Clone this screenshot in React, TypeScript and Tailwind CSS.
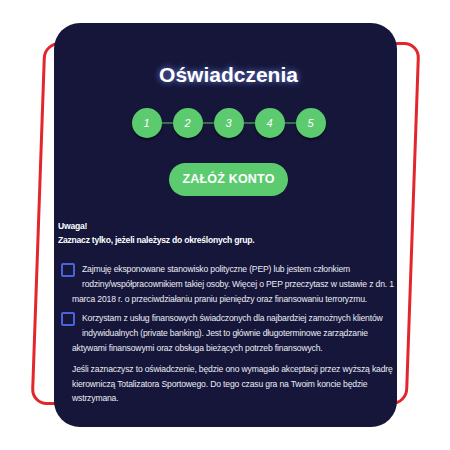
const steps = [1, 2, 3, 4, 5]

function Step({ n }: { n: number }) {
  return (
    <div className="w-[30px] h-[30px] rounded-full bg-[#5ccb70] shadow-[0_2px_2px_rgba(0,0,0,0.45)] flex items-center justify-center">
      <span className="text-[11px] italic text-white leading-none">{n}</span>
    </div>
  )
}

function Declaration({ lines }: { lines: string[] }) {
  return (
    <div className="pl-[14px] text-[8.6px] tracking-[-0.16px] leading-[15px] text-[#ececf4] whitespace-nowrap flow-root">
      <span className="float-left w-[14px] h-[14px] mt-[0.5px] ml-[-11px] mr-[7px] mb-[8px] rounded-[2px] border-2 border-[#4b62dd]" />
      {lines.map((line, i) => (
        <span key={i}>
          {line}
          {i < lines.length - 1 && <br />}
        </span>
      ))}
    </div>
  )
}

export default function App() {
  return (
    <div
      className="relative w-[450px] h-[450px] bg-white overflow-hidden"
      style={{ fontFamily: '"Liberation Sans", Arial, sans-serif' }}
    >
      {/* red outline behind the card */}
      <div className="absolute left-[37px] top-[42px] w-[377px] h-[363px] rounded-[16px] border-[3px] border-[#e3262b] [transform:skewX(-2deg)]" />

      <div className="relative ml-[54px] mt-[23px] w-[343px] h-[404px] rounded-[26px] bg-[#15163a] px-[4px] pt-[38px]">
        <div className="flex flex-col items-center pl-[6px]">
          <h1 className="text-[21px] font-bold leading-[28px] text-white [text-shadow:0_0_6px_rgba(130,150,255,0.85)]">
            Oświadczenia
          </h1>

          <div className="mt-[19px] flex items-center">
            {steps.map((n, i) => (
              <div key={n} className="flex items-center">
                {i > 0 && <div className="w-[11px] h-[2px] bg-[#347049]" />}
                <Step n={n} />
              </div>
            ))}
          </div>

          <button className="mt-[25px] w-[119px] h-[33px] rounded-full bg-[#5ccb70] text-white text-[12.5px] font-bold tracking-[0.2px]">
            ZAŁÓŻ KONTO
          </button>
        </div>

        <div className="mt-[23px] text-[8.6px] tracking-[-0.25px] leading-[14px] font-bold text-white">
          <p>Uwaga!</p>
          <p>Zaznacz tylko, jeżeli należysz do określonych grup.</p>
        </div>

        <div className="mt-[15px] flex flex-col gap-[4px]">
          <Declaration
            lines={[
              'Zajmuję eksponowane stanowisko polityczne (PEP) lub jestem członkiem',
              'rodziny/współpracownikiem takiej osoby. Więcej o PEP przeczytasz w ustawie z dn. 1',
              'marca 2018 r. o przeciwdziałaniu praniu pieniędzy oraz finansowaniu terroryzmu.',
            ]}
          />
          <Declaration
            lines={[
              'Korzystam z usług finansowych świadczonych dla najbardziej zamożnych klientów',
              'indywidualnych (private banking). Jest to głównie długoterminowe zarządzanie',
              'aktywami finansowymi oraz obsługa bieżących potrzeb finansowych.',
            ]}
          />
        </div>

        <p className="mt-[6px] pl-[14px] text-[8.6px] tracking-[-0.16px] leading-[14.5px] text-[#ececf4] whitespace-nowrap">
          Jeśli zaznaczysz to oświadczenie, będzie ono wymagało akceptacji przez wyższą kadrę
          <br />
          kierowniczą Totalizatora Sportowego. Do tego czasu gra na Twoim koncie będzie
          <br />
          wstrzymana.
        </p>
      </div>
    </div>
  )
}
